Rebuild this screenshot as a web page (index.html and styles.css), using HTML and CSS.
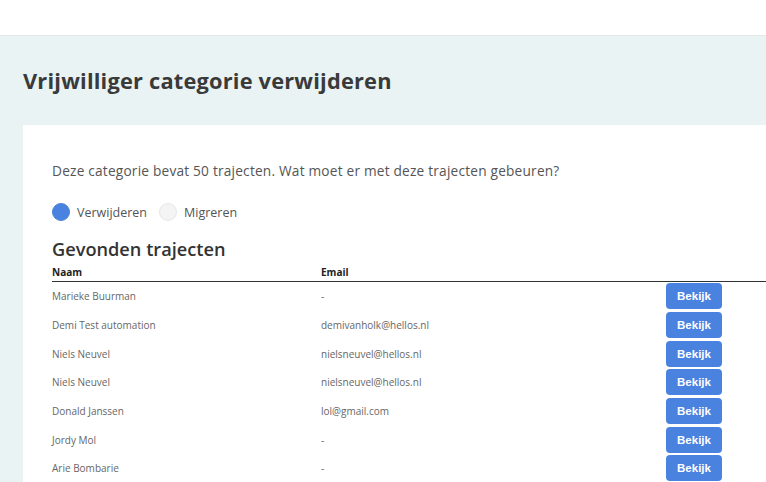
FILE: index.html
```html
<!DOCTYPE html>
<html lang="nl">
<head>
  <meta charset="UTF-8">
  <title>Vrijwilliger categorie verwijderen</title>
  <link rel="stylesheet" href="styles.css">
</head>
<body>
  <header class="topbar"></header>

  <main class="page">
    <h1 class="page-title">Vrijwilliger categorie verwijderen</h1>

    <section class="card">
      <p class="question">Deze categorie bevat 50 trajecten. Wat moet er met deze trajecten gebeuren?</p>

      <div class="choices">
        <label class="choice">
          <span class="radio checked"></span>
          Verwijderen
        </label>
        <label class="choice">
          <span class="radio"></span>
          Migreren
        </label>
      </div>

      <h2 class="section-title">Gevonden trajecten</h2>

      <table class="results">
        <thead>
          <tr>
            <th class="col-name">Naam</th>
            <th class="col-email">Email</th>
            <th class="col-action"></th>
          </tr>
        </thead>
        <tbody>
          <tr><td>Marieke Buurman</td><td>-</td><td><button class="btn">Bekijk</button></td></tr>
          <tr><td>Demi Test automation</td><td>demivanholk@hellos.nl</td><td><button class="btn">Bekijk</button></td></tr>
          <tr><td>Niels Neuvel</td><td>nielsneuvel@hellos.nl</td><td><button class="btn">Bekijk</button></td></tr>
          <tr><td>Niels Neuvel</td><td>nielsneuvel@hellos.nl</td><td><button class="btn">Bekijk</button></td></tr>
          <tr><td>Donald Janssen</td><td>lol@gmail.com</td><td><button class="btn">Bekijk</button></td></tr>
          <tr><td>Jordy Mol</td><td>-</td><td><button class="btn">Bekijk</button></td></tr>
          <tr><td>Arie Bombarie</td><td>-</td><td><button class="btn">Bekijk</button></td></tr>
        </tbody>
      </table>
    </section>
  </main>
</body>
</html>
```

FILE: styles.css
```css
html, body {
  margin: 0;
  padding: 0;
  overflow: hidden;
}
body {
  font-family: "Open Sans", Arial, sans-serif;
  color: #333;
  background: #e9f3f3;
  width: 766px;
  height: 482px;
}
.topbar {
  height: 35px;
  background: #fff;
  border-bottom: 1px solid #e4eaea;
}
.page {
  padding: 30px 0 0 23px;
}
.page-title {
  margin: 0;
  font-size: 21.8px;
  font-weight: 700;
  color: #3a3a3a;
  line-height: 30px;
  letter-spacing: 0.2px;
}
.card {
  margin-top: 29px;
  background: #fff;
  padding: 36px 0 20px 29px;
}
.question {
  margin: 0;
  font-size: 13.7px;
  color: #555;
  line-height: 20px;
  letter-spacing: 0.2px;
}
.choices {
  display: flex;
  align-items: center;
  margin-top: 22px;
}
.choice {
  display: flex;
  align-items: center;
  font-size: 12.5px;
  color: #555;
  margin-right: 12px;
}
.radio {
  width: 18px;
  height: 18px;
  border-radius: 50%;
  background: #f4f4f4;
  border: 1px solid #e6e6e6;
  box-sizing: border-box;
  margin-right: 7px;
}
.radio.checked {
  background: #4a82e0;
  border-color: #4a82e0;
}
.section-title {
  margin: 16px 0 0;
  font-size: 18.2px;
  font-weight: 600;
  color: #333;
  line-height: 24px;
}
.results {
  border-collapse: collapse;
  width: 100%;
  margin-top: 2px;
}
.results th {
  text-align: left;
  font-size: 10px;
  font-weight: 700;
  color: #222;
  padding: 2px 0 2px;
  border-bottom: 1.5px solid #333;
}
.col-name { width: 269px; }
.col-email { width: 345px; }
.results td {
  font-size: 10px;
  color: #666;
  height: 28.7px;
  padding: 0;
  vertical-align: middle;
}
.btn {
  display: block;
  width: 56px;
  height: 26px;
  border: none;
  border-radius: 4px;
  background: #4a82e0;
  color: #fff;
  font-family: "Liberation Sans", Arial, sans-serif;
  font-size: 11.5px;
  font-weight: 700;
  cursor: pointer;
}
```
